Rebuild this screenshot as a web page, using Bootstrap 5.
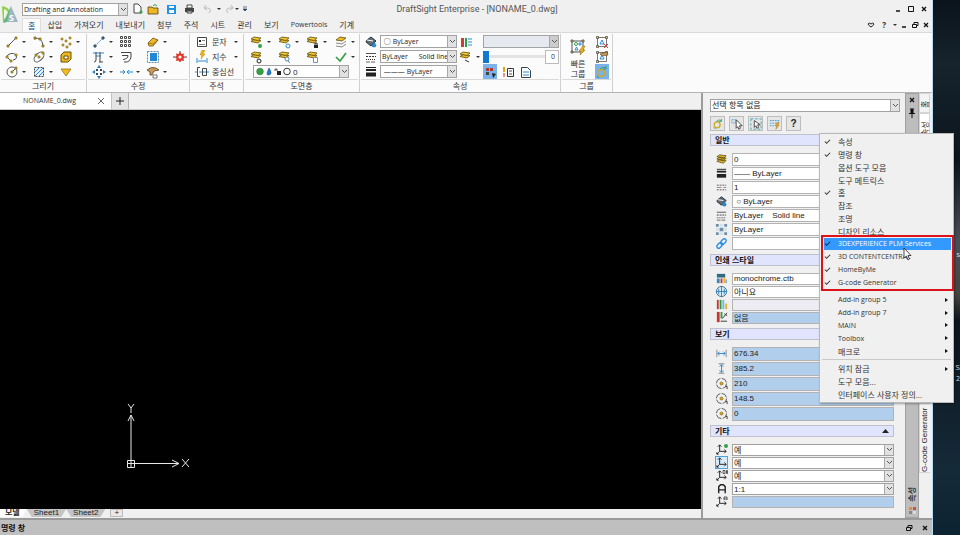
<!DOCTYPE html>
<html lang="ko">
<head>
<meta charset="utf-8">
<meta name="viewport" content="width=device-width, initial-scale=1">
<title>DraftSight Enterprise - [NONAME_0.dwg]</title>
<link href="https://cdn.jsdelivr.net/npm/bootstrap@5.3.0/dist/css/bootstrap.min.css" rel="stylesheet">
<style>
body{font:8px/12px "Open Sans","Noto Sans CJK KR",sans-serif;color:#333;background:#0c151d;overflow:hidden}
button,select,input{font:inherit;color:inherit}
svg{display:block;flex:none}
.ic{width:14px;height:14px}
.app{background:#f0f0f0;border-right:1px solid #b9dcf5;min-width:0}
.desk{width:27px;background:linear-gradient(#0a131b,#16232d 12%,#0b151d 30%,#4a4e59 45%,#47443f 55%,#0a141b 60%,#10202b 75%,#152a38 88%,#0c2331);color:#ddd;padding:248px 0 0}
.desk span{line-height:12px}
.brand{width:22px;padding:5px 0 0 1px}
.lat{font-size:7px}
.combo{background:#fff;border:1px solid #a2a2a2;height:13px;min-width:0}
.combo select{appearance:none;border:0;background:transparent;padding:0 0 0 1px;line-height:11px;outline:0;color:#222;min-width:0;width:100%}
.chev{width:9px;background:#e1e1e1;border-left:1px solid #a8a8a8;align-self:stretch;flex:none;display:grid;place-items:center}
.chev svg{width:7px;height:5px}
.tool{padding:0;border:0;border-radius:0;height:15px;line-height:12px;background:transparent;display:flex;align-items:center;gap:3px;color:#333;font-size:8px;white-space:nowrap}
.tri{width:0;height:0;border:2px solid transparent;border-top-color:#333;border-bottom:0;flex:none}
.qat{padding:0;border:0;background:transparent}
.win{font-size:8px}
.win svg{width:8px;height:8px}
.menutab{padding:0 6px;color:#333;text-decoration:none;line-height:14px;height:14px}
.menutab.on{background:#fbfbfb;color:#234e86;border:1px solid #ddd;border-bottom:0;line-height:13px;padding:0 5px}
.ribbon{background:#fbfbfb;border-top:1px solid #d9d9d9;border-bottom:1px solid #b5b5b5;padding-top:1px}
.grp{border-right:1px solid #d0d0d0;padding:0 1px}
.grp-name{border-top:1px solid #d9d9d9;text-align:center;line-height:12px;height:13px}
.tools{display:grid;grid-auto-rows:15px;align-items:center}
.g1{grid-template-columns:repeat(3,27px);padding-left:4px;width:84px}
.g2{grid-template-columns:27px 27px 27px 15px;padding-left:4px;width:100px}
.g3{width:51px;padding-left:4px}
.g4{grid-template-columns:repeat(4,28px);padding-left:5px;width:113px}
.g5{grid-template-columns:14px 77px 22px 76px;padding-left:3px;column-gap:2px;width:198px}
.g6{width:49px;padding:0 2px 0 7px;height:45px}
.sel{background:#7cb2ea}
.track{height:3px;background:#e3e3e3}
.docs{height:17px;background:#f0f0f0;border-bottom:1px solid #c9c9c9}
.doc{background:#fff;width:112px;border-right:1px solid #c4c4c4;padding:0 6px 0 23px}
.plus{width:17px;border:0;border-right:1px solid #b5b5b5;background:#e4e4e4;padding:0}
.cad{background:#000;padding:0 0 40px 125px;min-height:0}
.sheets{height:9px;background:#f0f0f0;overflow:hidden}
.sheets button{border:0;padding:0 7px;line-height:8px;height:8px;background:#c4c4c4;color:#222;clip-path:polygon(0 0,100% 0,calc(100% - 5px) 100%,5px 100%);font-family:"Liberation Sans","Noto Sans CJK KR",sans-serif}
.sheets button.on{background:#fff;padding-left:5px;font-weight:700;clip-path:polygon(0 0,100% 0,calc(100% - 5px) 100%,0 100%)}
.sheets button.add{clip-path:none;background:#e8e8e8;border:1px solid #bbb;padding:0 3px;margin-left:5px;line-height:6px}
.cmd{background:#bfbfbf;border-top:2px solid #9a9a9a;height:17px;padding:0 3px 0 1px;color:#111}
.props{width:204px;border-left:2px solid #9c9c9c;padding:6px 0 0 7px;font-family:"Liberation Sans","Noto Sans CJK KR",sans-serif;color:#222;flex:none}
.props .combo{margin-right:5px}
.pbtns{gap:4px;margin:4px 0 3px}
.pbtn{width:15px;height:15px;padding:0;border:1px solid #bdbdbd;background:#e6e6e6;display:grid;place-items:center}
.pbtn svg{width:12px;height:12px}
.sec{margin-right:11px}
.sec h2{font-size:8px;line-height:11px;height:12px;margin:0;font-weight:700;background:#e0e4fd;border:1px solid #bfc1cf;padding:0 4px;color:#111}
.rows{padding:6px 0 4px}
.row-p{display:grid;grid-template-columns:22px 1fr;align-items:center;height:13px}
.row-p svg.ic{width:13px;height:13px;margin-left:5px}
.tall .row-p{height:14px}.view .row-p{height:15px}
.fld{height:12px;border:1px solid #b3b3b3;background:#fff;width:100%;padding:0 1px;border-radius:0;line-height:10px;color:#222;min-width:0}
.view .fld{height:14px}.tall .fld{height:13px}
.fld.blue{background:#b1cfec}.fld.dim{background:#ececf2}
.props .row-p .combo{margin:0;height:12px}
.rail{width:14px;background:#bdbdbd;border:1px solid #a0a0a0;flex:none;padding:2px 0}
.side{width:13px;flex:none;background:#f0f0f0}
.vert{writing-mode:vertical-rl;text-orientation:sideways;transform:rotate(180deg);white-space:nowrap}
.side a{color:#222;text-decoration:none;display:block;border:1px solid #d5d5d5;background:#f3f3f3;line-height:9px;width:11px}
.side a.gcode{font-family:"Liberation Sans",sans-serif;border-left:0;height:70px;padding-bottom:4px}
.ctx{position:absolute;left:819px;top:133px;width:135px;background:#f0f0f0;border:1px solid #b9b9b9;padding:2px 2px 1px;color:#333;box-shadow:1px 1px 2px #0005}
.ctx ul{list-style:none;margin:0;padding:0;display:flex;flex-direction:column}
.ctx li{flex:1 1 0;display:flex;min-height:0}
.ctx .opt{border:0;padding:0 3px 0 0;background:transparent;width:100%;margin:0 0 1px 2px;display:flex;align-items:center;text-align:left;line-height:11px;white-space:nowrap}
.opt .ck{width:14px}
.opt .ck svg{width:7px;height:7px}
.opt.hot{background:#3399ff;color:#fff}.opt.hot .ck{color:#124}
.m1{height:153px}.m2{height:64px}.m3{height:38px}
.rule{border-top:1px solid #c9c9c9;margin:1px 0 3px}
.gap5{height:5px}
.arr{width:0;height:0;border:2px solid transparent;border-left:3px solid #111;border-right:0;margin-left:auto}
.redbox{position:absolute;left:1px;top:101px;width:133px;height:56px;border:2px solid #dc1219;pointer-events:none}
.cursor{position:absolute;left:83px;top:113px;width:9px;height:14px}
.sp1{margin-left:4px}
.ttl{font:9px/16px Roboto,sans-serif;color:#555}
</style>
<script src="https://cdn.jsdelivr.net/npm/bootstrap@5.3.0/dist/js/bootstrap.bundle.min.js"></script>
</head>
<body class="vh-100 d-flex position-relative">
<svg width="0" height="0" class="position-absolute" aria-hidden="true">
<defs>
<symbol id="chv" viewBox="0 0 7 5"><path d="M1 1l2.500 2.500L6 1" fill="none" stroke="#555"/></symbol>
<symbol id="layers" viewBox="0 0 14 14"><path d="M2 9l3-2 7 1-3 3zM2 6.500l3-2 7 1-3 3zM2 4l3-2 7 1-3 3z" fill="#e8b71e" stroke="#4e4518" stroke-width=".8"/></symbol>
<symbol id="lay-s" viewBox="0 0 14 14"><path d="M1 6.500l3-2 7 1-3 2.500z" fill="#edbd20" stroke="#5a4b12" stroke-width=".8"/><path d="M1 4l3-2 7 1-3 2.500z" fill="#f6c928" stroke="#5a4b12" stroke-width=".8"/></symbol>
<symbol id="line" viewBox="0 0 14 14"><path d="M3 11L11 3" stroke="#555"/><path d="M2 10h2v2H2zM10 2h2v2h-2z" fill="#e0bd2a" stroke="#6b5a12" stroke-width=".7"/></symbol>
<symbol id="arc" viewBox="0 0 14 14"><path d="M2 4q8-3 9 7" fill="none" stroke="#555"/><path d="M2 2h2v2H2zM7 3h2v2H7zM10 10h2v2h-2z" fill="#e0bd2a" stroke="#6b5a12" stroke-width=".7"/></symbol>
<symbol id="pts" viewBox="0 0 14 14"><g fill="#e3b524" stroke="#6b5a12" stroke-width=".5"><path d="M2 3h2v2H2zM6 5h2v2H6zM10 2h2v2h-2zM3 9h2v2H3zM10 8h2v2h-2zM7 11h2v2H7z"/></g></symbol>
<symbol id="poly" viewBox="0 0 14 14"><path d="M2 7a5 4 0 019-2q2 4-3 5M2 7l4 4" fill="none" stroke="#555"/><path d="M1 6h2v2H1zM5 10h2v2H5zM10 4h2v2h-2z" fill="#e0bd2a" stroke="#6b5a12" stroke-width=".6"/></symbol>
<symbol id="ell" viewBox="0 0 14 14"><ellipse cx="7" cy="7" rx="6" ry="3.500" transform="rotate(-45 7 7)" fill="none" stroke="#555"/><path d="M6 6h2v2H6zM10 2h2v2h-2zM3 4h2v2H3z" fill="#d7b632" stroke="#6b5a12" stroke-width=".6"/></symbol>
<symbol id="reg" viewBox="0 0 14 14"><path d="M2 5l3-3h7v7l-3 3H2z" fill="#ecb91f" stroke="#6b4f08"/><path d="M5 6h4v3H5z" fill="#fff" stroke="#6b4f08"/></symbol>
<symbol id="circ" viewBox="0 0 14 14"><circle cx="7" cy="7" r="5" fill="#fff" stroke="#555"/><path d="M7 7l3-3" stroke="#555"/><path d="M6 6h2v2H6zM10 2h2v2h-2z" fill="#d7b632" stroke="#6b5a12" stroke-width=".6"/></symbol>
<symbol id="hat" viewBox="0 0 14 14"><path d="M2.500 2.500h9v9h-9z" fill="#e6f2fb" stroke="#444" stroke-dasharray="2 1"/><path d="M3 7l4-4M3 11l8-8M7 11l4-4" stroke="#2c8bd6"/></symbol>
<symbol id="ytri" viewBox="0 0 14 14"><path d="M2 4h10L7 11z" fill="#f4bd1b" stroke="#8a650a" stroke-width=".7"/></symbol>
<symbol id="move" viewBox="0 0 14 14"><path d="M3 11L11 3" stroke="#3a96dd" stroke-dasharray="2 1"/><path d="M2 10h2v2H2zM10 2h2v2h-2z" fill="#5f90b5" stroke="#345"/></symbol>
<symbol id="grid9" viewBox="0 0 14 14"><g fill="#fff" stroke="#444"><path d="M1.500 1.500h2v2h-2zM5.500 1.500h2v2h-2zM9.500 1.500h2v2h-2zM1.500 5.500h2v2h-2zM5.500 5.500h2v2h-2zM9.500 5.500h2v2h-2zM1.500 9.500h2v2h-2zM5.500 9.500h2v2h-2zM9.500 9.500h2v2h-2z"/></g></symbol>
<symbol id="erase" viewBox="0 0 14 14"><path d="M2 8l5-5 5 2-5 6H3z" fill="#f2b72c" stroke="#6b4f08" stroke-width=".8"/><path d="M2 8l5 1 5-4" fill="none" stroke="#6b4f08" stroke-width=".6"/></symbol>
<symbol id="trim" viewBox="0 0 14 14"><path d="M1 3h11M4 6h5" stroke="#2c8bd6"/><path d="M4 2v8q0 2-2 2M8 2v10M7 12h4" stroke="#444" fill="none"/></symbol>
<symbol id="off" viewBox="0 0 14 14"><path d="M2 2.500h10V7q-1 5-5 5H5M3 5.500h6Q9 9 4 9.500" fill="none" stroke="#444"/></symbol>
<symbol id="box" viewBox="0 0 14 14"><path d="M4 3h7v8H4z" fill="#2088d8"/><path d="M1.500 1.500h11v11h-11z" fill="none" stroke="#5a86a8" stroke-dasharray="2 1"/></symbol>
<symbol id="burst" viewBox="0 0 14 14"><path d="M0 7h14M7 1v12" stroke="#444" stroke-dasharray="2 1"/><path d="M7 2l1.500 2 2.500-.5-.5 2.500 2 1-2 1.500.5 2.500-2.500-.5L7 12l-1.500-1.500L3 11l.5-2.500-2-1.500 2-1L3 3.500l2.500.5z" fill="#e3372a"/><circle cx="7" cy="7" r="1.600" fill="#fff"/></symbol>
<symbol id="arr4" viewBox="0 0 14 14"><path d="M7 0l2 3H5zM7 14l2-3H5zM0 7l3-2v4zM14 7l-3-2v4z" fill="#2c7cc0"/><path d="M4 4h2v2H4zM8 4h2v2H8zM4 8h2v2H4zM8 8h2v2H8z" fill="#345"/></symbol>
<symbol id="join" viewBox="0 0 14 14"><path d="M1 7h5M8 7h6M4 5l2 2-2 2M10 5L8 7l2 2" stroke="#2c8bd6" fill="none"/></symbol>
<symbol id="brush" viewBox="0 0 14 14"><path d="M1 5q4-4 9-2l3 2-5 1-2 4H4V7z" fill="#c89a5a" stroke="#5a4020" stroke-width=".8"/><path d="M7 10h4v3H7z" fill="#fff" stroke="#444" stroke-width=".7"/></symbol>
<symbol id="note" viewBox="0 0 14 14"><path d="M2.500 2.500h9v9h-9z" fill="#fff" stroke="#444"/><path d="M4 5h2v2H4z" fill="#222"/><path d="M7 5.500h3M4 9.500h6" stroke="#888"/></symbol>
<symbol id="dim" viewBox="0 0 14 14"><path d="M7 0L5 5h2L6 9l4-5H8l2-4z" fill="#f0b41a" stroke="#a9780b" stroke-width=".4"/><path d="M2 8v5M12 8v5M3 11h8" stroke="#2c8bd6"/></symbol>
<symbol id="cen" viewBox="0 0 14 14"><path d="M5 2.500H2.500v9H5M7.500 3.500h4v7h-4z" fill="none" stroke="#444"/><path d="M0 7h14" stroke="#2c8bd6" stroke-dasharray="3 1"/></symbol>
<symbol id="chk" viewBox="0 0 14 14"><path d="M2 7l4 4 6-8" fill="none" stroke="#35a045" stroke-width="1.700"/></symbol>
<symbol id="paint" viewBox="0 0 14 14"><path d="M3 5l4-3 5 4-5 5-5-4z" fill="#5f6d78" stroke="#26323b"/><path d="M3 5l6 1" stroke="#fff"/><path d="M10 7q4 5 0 5t0-5" fill="#2c8bd6" stroke="#1a5d92" stroke-width=".5"/></symbol>
<symbol id="dash" viewBox="0 0 14 14"><path d="M2 3.500h10" stroke="#555"/><path d="M2 6.500h10" stroke="#333" stroke-dasharray="2 1"/><path d="M2 9.500h10" stroke="#333" stroke-dasharray="1 1"/><path d="M2 12h10" stroke="#666" stroke-dasharray="4 1"/></symbol>
<symbol id="dash2" viewBox="0 0 14 14"><path d="M2 4.500h10M2 9.500h10" stroke="#555" stroke-dasharray="2 1"/><path d="M2 7h10" stroke="#888" stroke-dasharray="5 2"/></symbol>
<symbol id="wt" viewBox="0 0 14 14"><path d="M2 2.500h10" stroke="#222"/><path d="M2 5h10" stroke="#222" stroke-width="2"/><path d="M2 9.500h10" stroke="#222" stroke-width="4"/></symbol>
<symbol id="ctab" viewBox="0 0 14 14"><path d="M2 3h3v9H2z" fill="#d23b34"/><path d="M6 3h2v9H6z" fill="#2c9c45"/><path d="M10 3v9M12 3v9" stroke="#2c8bd6" stroke-dasharray="2 1"/></symbol>
<symbol id="quick" viewBox="0 0 18 18"><path d="M3 3h11v11H3z" fill="#fff" stroke="#555"/><path d="M2 2h2v2H2zM13 2h2v2h-2zM2 13h2v2H2z" fill="#f4d96a" stroke="#444" stroke-width=".8"/><circle cx="7" cy="6" r="1.500" fill="none" stroke="#37a04b"/><path d="M10 5h2v2h-2zM6 12l1.500-3L9 12z" fill="none" stroke="#2c8bd6"/><path d="M14 8l-4 5h2l-1 4 5-5h-2l2-4z" fill="#eeb119" stroke="#8a650a" stroke-width=".5"/></symbol>
<symbol id="grp" viewBox="0 0 14 14"><path d="M2.500 2.500h9v9h-9z" fill="#fff" stroke="#777"/><path d="M1.500 1.500h2v2h-2zM10.500 1.500h2v2h-2zM1.500 10.500h2v2h-2z" fill="#eaca50" stroke="#444" stroke-width=".7"/><path d="M5 9l2-4 2 4z" fill="none" stroke="#2c8bd6"/></symbol>
<symbol id="pick" viewBox="0 0 14 14"><circle cx="6" cy="8" r="3.500" fill="none" stroke="#d0a91c" stroke-width="1.500"/><path d="M5 4q3-3 6-1M11 1v3H8" fill="none" stroke="#2f9e7d"/><path d="M2 11l2 2" stroke="#2c8bd6"/></symbol>
<symbol id="cur" viewBox="0 0 14 14"><path d="M1 2h4v4H1z" fill="none" stroke="#5a9cc9" stroke-dasharray="2 1"/><path d="M6 2v10l2-2 1 3 2-1-1-3h3z" fill="#fff" stroke="#333"/></symbol>
<symbol id="sell" viewBox="0 0 14 14"><path d="M1 1h12v12H1z" fill="none" stroke="#2c9fb5" stroke-dasharray="3 2"/><path d="M5 3v8l2-2 1 3 2-1-1-3h3z" fill="#fff" stroke="#333"/></symbol>
<symbol id="flt" viewBox="0 0 14 14"><path d="M1 3h12M1 6h10M1 9h6" stroke="#3a8fce" stroke-dasharray="2 1"/><path d="M10 5l-3 4h2l-1 4 4-5h-2l2-3z" fill="#eeb119" stroke="#8a650a" stroke-width=".5"/></symbol>
<symbol id="trn" viewBox="0 0 14 14"><path d="M1 1h3v3H1zM10 1h3v3h-3zM5 5h4v4H5zM1 10h3v3H1zM10 10h3v3h-3z" fill="#6e90a8"/><path d="M5 1h4v3H5zM1 5h3v4H1zM10 5h3v4h-3zM5 10h4v3H5z" fill="#d6e2ea"/></symbol>
<symbol id="link" viewBox="0 0 14 14"><g fill="none" stroke="#2b8fdf" stroke-width="1.500"><rect x="5.500" y="3" width="7" height="4" rx="2" transform="rotate(-45 9 5)"/><rect x="1.500" y="7" width="7" height="4" rx="2" transform="rotate(-45 5 9)"/></g></symbol>
<symbol id="pst" viewBox="0 0 14 14"><path d="M2 2h9v4H2z" fill="#2f6b84"/><path d="M2 7h3v5H2z" fill="#3b86b1"/><path d="M6 7h2v5H6z" fill="#c33c36"/><path d="M9 6h2v6H9z" fill="#e5b42f"/><path d="M12 8v4" stroke="#3b86b1"/></symbol>
<symbol id="glb" viewBox="0 0 14 14"><circle cx="7" cy="7" r="5.500" fill="#d9ecf7" stroke="#4a6b80"/><path d="M7 1v12M1 7h12M4 4v6M10 4v6" stroke="#2b86bf"/></symbol>
<symbol id="pct" viewBox="0 0 14 14"><path d="M2 2h2v10H2z" fill="#c93631"/><path d="M5 2h2v10H5z" fill="#2c9c45"/><path d="M8 2h2v10H8z" fill="#6fb9dc"/><path d="M11 6h2v6h-2z" fill="#e4b22c"/></symbol>
<symbol id="pno" viewBox="0 0 14 14"><path d="M2 1h3v11H2z" fill="#c93631"/><path d="M6 1h2v7H6z" fill="#2c9c45"/><path d="M6 11h7M8 8l5-6M10 3l3 2" stroke="#333" fill="none"/></symbol>
<symbol id="wid" viewBox="0 0 14 14"><path d="M2 3v8M12 3v8" stroke="#888"/><path d="M3 7h8M5 5L3 7l2 2M9 5l2 2-2 2" fill="none" stroke="#2c86d1"/></symbol>
<symbol id="hgt" viewBox="0 0 14 14"><path d="M4 2h6M4 12h6" stroke="#777"/><path d="M7 3v8M5 5l2-2 2 2M5 9l2 2 2-2" fill="none" stroke="#2c86d1"/></symbol>
<symbol id="cc" viewBox="0 0 14 14"><circle cx="7" cy="7" r="5.500" fill="none" stroke="#555" stroke-dasharray="7 1.500"/><circle cx="7" cy="7" r="1.700" fill="#d8a21c" stroke="#6b4f08" stroke-width=".5"/><path d="M11 10h2v3" fill="none" stroke="#333"/></symbol>
<symbol id="ucs" viewBox="0 0 14 14"><path d="M5 2v7h7M5 9l-3 3M3 4l2-2 2 2M10 7l2 2-2 2M2 10v2h2" fill="none" stroke="#222"/></symbol>
<symbol id="ck" viewBox="0 0 8 8"><path d="M1 4l2 2 4-4" fill="none" stroke="currentColor" stroke-width="1.200"/></symbol>
<symbol id="x" viewBox="0 0 8 8"><path d="M2 2l4 4M6 2L2 6" stroke="#111" stroke-width="1.300"/></symbol>
<symbol id="min" viewBox="0 0 8 8"><path d="M2 6h4" stroke="#111" stroke-width="1.500"/></symbol>
<symbol id="max" viewBox="0 0 8 8"><path d="M1.500 1.500h5v5h-5z" fill="none" stroke="#111"/></symbol>
<symbol id="rst" viewBox="0 0 8 8"><path d="M3 3V1.500h4v3H5.500M1.500 3.500h4v3h-4z" fill="none" stroke="#111"/></symbol>
</defs></svg>

<div class="app d-flex flex-column flex-fill">
  <header class="d-flex">
    <div class="brand"><svg width="18" height="22" viewBox="0 0 18 22"><path d="M1 1q8 1 8 8t-7 8z" fill="#8ed14a"/><path d="M3 4q4 1 4 5t-4 5z" fill="#e9f6dc"/><path d="M10 1l7 16H5z" fill="#9fb6c4"/><path d="M10 1L6 17l-4 1z" fill="#5fb87f"/><text x="8" y="16" font-size="9" font-weight="700" fill="#fff" font-family="Open Sans">S</text></svg></div>
    <div class="flex-fill d-flex flex-column">
      <div class="d-flex align-items-center position-relative" style="height:18px">
        <div class="combo d-flex lat" style="width:106px"><select aria-label="작업 공간"><option>Drafting and Annotation</option></select><span class="chev"><svg><use href="#chv"/></svg></span></div>
        <div class="d-flex align-items-center ms-1" style="gap:3px">
          <button class="qat" aria-label="새로 만들기"><svg width="12" height="12" viewBox="0 0 12 12"><path d="M2 1h4l3 3v6H2z" fill="#fff" stroke="#444"/><path d="M9 7v4M7 9h4" stroke="#37a04b"/></svg></button>
          <button class="qat" aria-label="열기"><svg width="12" height="12" viewBox="0 0 12 12"><path d="M1 4h4l1 1h5v6H1z" fill="#edb624" stroke="#54410a" stroke-width=".8"/><path d="M6 3q2-3 4 0" fill="none" stroke="#37a04b"/></svg></button>
          <button class="qat sp1" aria-label="저장"><svg width="11" height="12" viewBox="0 0 11 12"><path d="M1 2h9v9H1z" fill="#1f94e4"/><path d="M3 3h5v2H3zM3 7h5v3H3z" fill="#fff"/></svg></button>
          <button class="qat sp1" aria-label="인쇄"><svg width="11" height="12" viewBox="0 0 11 12"><path d="M3 2h5v3H3z" fill="#fff" stroke="#444"/><path d="M1 5h9v4H1z" fill="#444"/><path d="M3 8h5v2H3z" fill="#ddd" stroke="#444"/></svg></button>
          <button class="qat sp1 d-flex align-items-center" aria-label="실행 취소"><svg width="11" height="12" viewBox="0 0 11 12"><path d="M4 2L2 5l3 2M2 5h4q4 1 1 5" fill="none" stroke="#bbb"/></svg><span class="tri ms-1"></span></button>
          <button class="qat d-flex align-items-center" aria-label="다시 실행"><svg width="11" height="12" viewBox="0 0 11 12"><path d="M7 2l2 3-3 2M9 5H5Q1 6 4 10" fill="none" stroke="#bbb"/></svg><span class="tri"></span></button>
          <button class="qat" aria-label="도구 모음 사용자 정의"><svg width="6" height="8" viewBox="0 0 6 8"><path d="M1 2h4M1 4h4l-2 2z" fill="#246" stroke="#246" stroke-width=".7"/></svg></button>
        </div>
        <span class="ttl position-absolute start-50 translate-middle-x text-nowrap">DraftSight Enterprise - [NONAME_0.dwg]</span>
        <div class="win ms-auto d-flex me-1" style="gap:5px"><button class="qat" aria-label="최소화"><svg><use href="#min"/></svg></button><button class="qat" aria-label="최대화"><svg><use href="#max"/></svg></button><button class="qat" aria-label="닫기"><svg><use href="#x"/></svg></button></div>
      </div>
      <nav class="d-flex align-items-end">
        <a href="#" class="menutab on">홈</a><a href="#" class="menutab">삽입</a><a href="#" class="menutab">가져오기</a><a href="#" class="menutab">내보내기</a><a href="#" class="menutab">첨부</a><a href="#" class="menutab">주석</a><a href="#" class="menutab">시트</a><a href="#" class="menutab">관리</a><a href="#" class="menutab">보기</a><a href="#" class="menutab lat">Powertools</a><a href="#" class="menutab">기계</a>
        <div class="win ms-auto d-flex align-items-center align-self-center" style="gap:3px;margin-right:2px"><button class="qat me-1" aria-label="즐겨찾기"><svg viewBox="0 0 8 8"><path d="M1 3q1-2 3 0 2-2 3 0-1 2-3 3-2-1-3-3z" fill="none" stroke="#222"/></svg></button><button class="qat fw-bold lh-1" aria-label="도움말">?</button><span class="tri ms-1"></span><button class="qat" aria-label="문서 최소화"><svg><use href="#min"/></svg></button><button class="qat" aria-label="문서 복원"><svg><use href="#rst"/></svg></button><button class="qat" aria-label="문서 닫기"><svg><use href="#x"/></svg></button></div>
      </nav>
    </div>
  </header>

  <section class="ribbon d-flex">
    <div class="grp"><div class="tools g1">
      <button class="tool" aria-label="선"><svg class="ic"><use href="#line"/></svg><span class="tri"></span></button>
      <button class="tool" aria-label="호"><svg class="ic"><use href="#arc"/></svg><span class="tri"></span></button>
      <button class="tool" aria-label="점"><svg class="ic"><use href="#pts"/></svg><span class="tri"></span></button>
      <button class="tool" aria-label="폴리선"><svg class="ic"><use href="#poly"/></svg><span class="tri"></span></button>
      <button class="tool" aria-label="타원"><svg class="ic"><use href="#ell"/></svg><span class="tri"></span></button>
      <button class="tool" aria-label="영역"><svg class="ic"><use href="#reg"/></svg></button>
      <button class="tool" aria-label="원"><svg class="ic"><use href="#circ"/></svg><span class="tri"></span></button>
      <button class="tool" aria-label="해치"><svg class="ic"><use href="#hat"/></svg><span class="tri"></span></button>
      <button class="tool" aria-label="마스크"><svg class="ic"><use href="#ytri"/></svg></button>
    </div><div class="grp-name">그리기</div></div>

    <div class="grp"><div class="tools g2">
      <button class="tool" aria-label="이동"><svg class="ic"><use href="#move"/></svg><span class="tri"></span></button>
      <button class="tool" aria-label="패턴"><svg class="ic"><use href="#grid9"/></svg></button>
      <button class="tool" aria-label="삭제"><svg class="ic"><use href="#erase"/></svg><span class="tri"></span></button><span></span>
      <button class="tool" aria-label="자르기"><svg class="ic"><use href="#trim"/></svg><span class="tri"></span></button>
      <button class="tool" aria-label="오프셋"><svg class="ic"><use href="#off"/></svg></button>
      <button class="tool" aria-label="축척"><svg class="ic"><use href="#box"/></svg></button>
      <button class="tool" aria-label="분해"><svg class="ic"><use href="#burst"/></svg></button>
      <button class="tool" aria-label="늘이기"><svg class="ic"><use href="#arr4"/></svg><span class="tri"></span></button>
      <button class="tool" aria-label="결합"><svg class="ic"><use href="#join"/></svg><span class="tri"></span></button>
      <button class="tool" aria-label="속성 복사"><svg class="ic"><use href="#brush"/></svg><span class="tri"></span></button>
    </div><div class="grp-name">수정</div></div>

    <div class="grp"><div class="tools g3">
      <button class="tool"><svg class="ic"><use href="#note"/></svg>문자<span class="tri ms-auto me-1"></span></button>
      <button class="tool"><svg class="ic"><use href="#dim"/></svg>지수<span class="tri ms-auto me-1"></span></button>
      <button class="tool"><svg class="ic"><use href="#cen"/></svg>중심선</button>
    </div><div class="grp-name">주석</div></div>

    <div class="grp"><div class="tools g4">
      <button class="tool" aria-label="도면층 켜기"><svg class="ic"><use href="#lay-s"/><circle cx="10" cy="11" r="2" fill="#37a04b"/></svg><span class="tri"></span></button>
      <button class="tool" aria-label="도면층 동결"><svg class="ic"><use href="#lay-s"/><circle cx="10" cy="11" r="2" fill="#fff" stroke="#2c8bd6"/></svg><span class="tri"></span></button>
      <button class="tool" aria-label="도면층 잠금"><svg class="ic"><use href="#lay-s"/><path d="M8 10h4v3H8z" fill="#222"/><path d="M9 10V8h2v2" fill="none" stroke="#222"/></svg><span class="tri"></span></button>
      <button class="tool" aria-label="도면층 병합"><svg class="ic" viewBox="0 0 14 14"><path d="M2 5l4-3 6 1-4 3z" fill="#edbd20" stroke="#5a4b12" stroke-width=".8"/><path d="M2 8l6 1 4-3M2 11l6 1 4-3" fill="none" stroke="#888"/></svg><span class="tri"></span></button>
      <button class="tool" aria-label="도면층 격리"><svg class="ic"><use href="#lay-s"/><circle cx="9" cy="11" r="2" fill="#fff" stroke="#222"/></svg></button>
      <button class="tool" aria-label="도면층 미리보기"><svg class="ic"><use href="#lay-s"/><circle cx="9" cy="9" r="2" fill="#fff" stroke="#5a86a8"/><path d="M10 11l2 2" stroke="#5a86a8"/></svg></button>
      <button class="tool" aria-label="도면층 상태"><svg class="ic"><use href="#lay-s"/><path d="M7.500 7.500h4v5h-4z" fill="#fff" stroke="#7a93a8"/></svg></button>
      <button class="tool" aria-label="도면층 활성화"><svg class="ic"><use href="#chk"/></svg><span class="tri"></span></button>
      <div class="combo d-flex align-items-center" style="grid-column:1/5;width:96px;margin-left:3px">
        <svg width="38" height="11" viewBox="0 0 38 11"><circle cx="6" cy="5.500" r="3.300" fill="#35a045" stroke="#23722f" stroke-width=".6"/><path d="M15 2q4 6 0 7t0-7" fill="#1d7fd0" stroke="#124e80" stroke-width=".6"/><path d="M23 5h4v4h-4z" fill="#222"/><path d="M21 5V3h2v2" fill="none" stroke="#222" stroke-width=".8"/><circle cx="33" cy="5.500" r="3.300" fill="#fff" stroke="#333"/></svg>
        <select aria-label="활성 도면층"><option>0</option></select><span class="chev"><svg><use href="#chv"/></svg></span></div>
    </div><div class="grp-name">도면층</div></div>

    <div class="grp"><div class="tools g5">
      <svg class="ic"><use href="#paint"/></svg>
      <div class="combo d-flex"><select class="lat" aria-label="선 색상"><option>&nbsp;○ ByLayer</option></select><span class="chev"><svg><use href="#chv"/></svg></span></div>
      <button class="tool" aria-label="색상 표"><svg class="ic"><use href="#ctab"/></svg></button>
      <div class="combo d-flex" style="background:#e6eaf0"><select disabled aria-label="인쇄 스타일"><option></option></select><span class="chev" style="background:#ccc"><svg><use href="#chv"/></svg></span></div>
      <svg class="ic"><use href="#dash"/></svg>
      <div class="combo d-flex"><select class="lat" aria-label="선 스타일"><option>ByLayer &nbsp; &nbsp; &nbsp;Solid line</option></select><span class="chev"><svg><use href="#chv"/></svg></span></div>
      <button class="tool" aria-label="투명도"><svg class="ic"><use href="#lay-s"/><path d="M6 10l4 2" stroke="#333"/></svg><span class="tri"></span></button>
      <div class="d-flex align-items-center"><div class="track flex-fill d-flex align-items-center"><svg width="6" height="12"><path d="M0 0h6v12H0z" fill="#0f79d2"/></svg></div><input class="lat text-end" aria-label="투명도 값" value="0" style="width:14px;height:14px;border:1px solid #bbb;padding:0 3px;background:#fff"></div>
      <svg class="ic"><use href="#wt"/></svg>
      <div class="combo d-flex"><select class="lat" aria-label="선 두께"><option>&nbsp;——— ByLayer</option></select><span class="chev"><svg><use href="#chv"/></svg></span></div>
      <span></span>
      <div class="d-flex gap-1"><button class="tool sel px-0" aria-label="속성 팔레트"><svg class="ic"><path d="M3 3h3v3H3zM7 3h3v3H7z" fill="#b0352c"/><path d="M3 7h3v3H3z" fill="#444"/><path d="M9 8l4 1-3 4z" fill="#222"/></svg></button><button class="tool" aria-label="속성 페인터"><svg class="ic" viewBox="0 0 14 14"><path d="M2 2h2v5H2z" fill="#e3a21f"/><path d="M3 8v4" stroke="#c33"/><path d="M6.500 3.500h6v8h-6z" fill="#fff" stroke="#333"/><path d="M8 6h3M8 9h3" stroke="#555"/></svg></button><button class="tool" aria-label="특성 목록"><svg class="ic" viewBox="0 0 14 14"><path d="M2.500 2.500h6l3 3v7h-9z" fill="#fff" stroke="#345"/><path d="M4 7h6M4 10h6" stroke="#2c8bd6"/></svg></button></div>
    </div><div class="grp-name">속성</div></div>

    <div class="grp"><div class="g6 d-flex justify-content-between">
      <button class="tool h-100 flex-column justify-content-between pt-1" style="line-height:10px"><svg width="18" height="18"><use href="#quick"/></svg><span>빠른<br>그룹</span></button>
      <div><button class="tool" aria-label="그룹 해제"><svg class="ic"><use href="#grp"/><path d="M9 9l4 4M13 9l-4 4" stroke="#e03a30"/></svg></button><button class="tool" aria-label="그룹 편집"><svg class="ic"><use href="#grp"/><path d="M5 4l7-2 1 3-6 1z" fill="#c89a5a" stroke="#5a4020" stroke-width=".6"/></svg></button><button class="tool sel" aria-label="그룹 선택"><svg class="ic"><use href="#pick"/></svg></button></div>
    </div><div class="grp-name">그룹</div></div>
  </section>

  <div class="d-flex flex-fill" style="min-height:0">
    <main class="d-flex flex-column flex-fill">
      <div class="docs d-flex"><div class="doc d-flex justify-content-between align-items-center"><span class="lat">NONAME_0.dwg</span><button class="qat" aria-label="문서 탭 닫기"><svg width="8" height="8" viewBox="0 0 8 8"><path d="M1 1l6 6M7 1L1 7" stroke="#444" stroke-width=".8"/></svg></button></div><button class="plus d-grid" style="place-items:center" aria-label="새 문서"><svg width="8" height="8" viewBox="0 0 8 8"><path d="M4 0v8M0 4h8" stroke="#222"/></svg></button></div>
      <div class="cad flex-fill d-flex align-items-end"><svg width="68" height="66" viewBox="0 0 68 66" fill="none" stroke="#e8e8e8"><path d="M2.500 57.500h7v7h-7zM6 12v53M2 60.500h51M3 18l3-6 3 6M47 57l7 3.500-7 3.500M3 1l3 4 3-4M6 5v5M57 56l7 8M64 56l-7 8"/></svg></div>
      <div class="sheets d-flex"><button class="on">모델</button><button>Sheet1</button><button>Sheet2</button><button class="add" aria-label="시트 추가">+</button></div>
    </main>

    <aside class="props">
      <div class="combo d-flex"><select aria-label="선택 항목"><option>선택 항목 없음</option></select><span class="chev"><svg><use href="#chv"/></svg></span></div>
      <div class="d-flex pbtns"><button class="pbtn" aria-label="선택 추가"><svg><use href="#pick"/></svg></button><button class="pbtn" aria-label="선택"><svg><use href="#cur"/></svg></button><button class="pbtn" aria-label="창 선택"><svg><use href="#sell"/></svg></button><button class="pbtn" aria-label="빠른 선택"><svg><use href="#flt"/></svg></button><button class="pbtn fw-bold" style="font-size:10px" aria-label="도움말">?</button></div>
      <section class="sec tall"><h2>일반</h2><div class="rows">
        <label class="row-p"><svg class="ic"><use href="#layers"/></svg><input class="fld" value="0"></label>
        <label class="row-p"><svg class="ic"><use href="#wt"/></svg><input class="fld" value="—— ByLayer"></label>
        <label class="row-p"><svg class="ic"><use href="#dash2"/></svg><input class="fld" value="1"></label>
        <label class="row-p"><svg class="ic"><use href="#paint"/></svg><input class="fld" value=" ○ ByLayer"></label>
        <label class="row-p"><svg class="ic"><use href="#dash"/></svg><input class="fld" value="ByLayer &nbsp; &nbsp;Solid line"></label>
        <label class="row-p"><svg class="ic"><use href="#trn"/></svg><input class="fld" value="ByLayer"></label>
        <label class="row-p"><svg class="ic"><use href="#link"/></svg><input class="fld" value=""></label>
      </div></section>
      <section class="sec"><h2>인쇄 스타일</h2><div class="rows">
        <label class="row-p"><svg class="ic"><use href="#pst"/></svg><input class="fld" value="monochrome.ctb"></label>
        <label class="row-p"><svg class="ic"><use href="#glb"/></svg><input class="fld" value="아니요"></label>
        <label class="row-p"><svg class="ic"><use href="#pct"/></svg><input class="fld dim" value=""></label>
        <label class="row-p"><svg class="ic"><use href="#pno"/></svg><input class="fld blue" value="없음"></label>
      </div></section>
      <section class="sec view"><h2>보기</h2><div class="rows">
        <label class="row-p"><svg class="ic"><use href="#wid"/></svg><input class="fld blue" value="676.34"></label>
        <label class="row-p"><svg class="ic"><use href="#hgt"/></svg><input class="fld blue" value="385.2"></label>
        <label class="row-p"><svg class="ic"><use href="#cc"/></svg><input class="fld blue" value="210"></label>
        <label class="row-p"><svg class="ic"><use href="#cc"/></svg><input class="fld blue" value="148.5"></label>
        <label class="row-p"><svg class="ic"><use href="#cc"/></svg><input class="fld blue" value="0"></label>
      </div></section>
      <section class="sec"><h2 class="d-flex justify-content-between align-items-center">기타<svg width="7" height="5" viewBox="0 0 7 5"><path d="M0 4h7L3.500 0z" fill="#222"/></svg></h2><div class="rows">
        <label class="row-p"><svg class="ic"><use href="#ucs"/><circle cx="11" cy="3" r="2" fill="#37a04b"/></svg><span class="combo d-flex"><select><option>예</option></select><span class="chev"><svg><use href="#chv"/></svg></span></span></label>
        <label class="row-p"><svg class="ic" style="background:#d7ebfb;outline:1px solid #4ba3e3;outline-offset:-1px"><use href="#ucs"/></svg><span class="combo d-flex"><select><option>예</option></select><span class="chev"><svg><use href="#chv"/></svg></span></span></label>
        <label class="row-p"><svg class="ic"><use href="#ucs"/><path d="M8 1.500h2v3H8zM11.500 1.500h1v3h-1z" fill="none" stroke="#333" stroke-width=".8"/></svg><span class="combo d-flex"><select><option>예</option></select><span class="chev"><svg><use href="#chv"/></svg></span></span></label>
        <label class="row-p"><svg class="ic" viewBox="0 0 14 14"><path d="M4 12V5l2-2h3l2 2v7M4 8.500h7" fill="none" stroke="#222" stroke-width="1.500"/></svg><span class="combo d-flex"><select><option>1:1</option></select><span class="chev"><svg><use href="#chv"/></svg></span></span></label>
        <label class="row-p"><svg class="ic"><use href="#ucs"/><path d="M9 5V2h3v3M9 4h3" fill="none" stroke="#333" stroke-width=".8"/></svg><input class="fld blue" value="" aria-label="주석 축척"></label>
      </div></section>
    </aside>
    <div class="rail d-flex flex-column align-items-center"><button class="qat" aria-label="팔레트 닫기"><svg width="8" height="8"><use href="#x"/></svg></button><button class="qat mt-1" aria-label="고정"><svg width="8" height="10" viewBox="0 0 8 10"><path d="M2 1h4M3 1v4h2V1M1 5.500h6M4 6v4" stroke="#111" fill="#111"/></svg></button><span class="vert mt-auto mb-1 fw-bold" style="line-height:12px">속성</span><svg width="9" height="9" viewBox="0 0 9 9"><path d="M1 1h3v3H1z" fill="#e58b3a"/><path d="M5 1h3v3H5z" fill="#cc4d42"/><path d="M1 5h3v3H1z" fill="#888"/><path d="M5 5h3v3H5z" fill="#d9d9d9"/></svg></div>
    <nav class="side d-flex flex-column"><a href="#" class="vert py-1" style="height:20px">홈</a><a href="#" class="vert text-end bg-white" style="height:290px"><span style="padding-bottom:7px">속성</span></a><a href="#" class="vert gcode">G-code Generator</a></nav>
  </div>
  <footer class="cmd d-flex align-items-center"><span class="fw-bold">명령 창</span><div class="win ms-auto d-flex gap-1"><button class="qat" aria-label="명령 창 분리"><svg><use href="#rst"/></svg></button><button class="qat ms-1" aria-label="명령 창 닫기"><svg><use href="#x"/></svg></button></div></footer>
</div>
<div class="desk d-flex flex-column align-items-end"><span>s</span><span style="margin-top:101px">S</span><span class="lat">2</span></div>

<div class="ctx">
  <ul class="m1">
    <li><button class="opt"><span class="ck"><svg><use href="#ck"/></svg></span>속성</button></li>
    <li><button class="opt"><span class="ck"><svg><use href="#ck"/></svg></span>명령 창</button></li>
    <li><button class="opt"><span class="ck"></span>옵션 도구 모음</button></li>
    <li><button class="opt"><span class="ck"></span>도구 메트릭스</button></li>
    <li><button class="opt"><span class="ck"><svg><use href="#ck"/></svg></span>홈</button></li>
    <li><button class="opt"><span class="ck"></span>참조</button></li>
    <li><button class="opt"><span class="ck"></span>조명</button></li>
    <li><button class="opt"><span class="ck"></span>디자인 리소스</button></li>
    <li><button class="opt lat hot"><span class="ck"><svg><use href="#ck"/></svg></span>3DEXPERIENCE PLM Services</button></li>
    <li><button class="opt lat"><span class="ck"><svg><use href="#ck"/></svg></span>3D CONTENTCENTRAL</button></li>
    <li><button class="opt lat"><span class="ck"><svg><use href="#ck"/></svg></span>HomeByMe</button></li>
    <li><button class="opt lat"><span class="ck"><svg><use href="#ck"/></svg></span>G-code Generator</button></li>
  </ul>
  <div class="gap5"></div>
  <ul class="m2">
    <li><button class="opt lat"><span class="ck"></span>Add-in group 5<span class="arr"></span></button></li>
    <li><button class="opt lat"><span class="ck"></span>Add-in group 7<span class="arr"></span></button></li>
    <li><button class="opt lat"><span class="ck"></span>MAIN<span class="arr"></span></button></li>
    <li><button class="opt lat"><span class="ck"></span>Toolbox<span class="arr"></span></button></li>
    <li><button class="opt"><span class="ck"></span>매크로<span class="arr"></span></button></li>
  </ul>
  <div class="rule"></div>
  <ul class="m3">
    <li><button class="opt"><span class="ck"></span>위치 잠금<span class="arr"></span></button></li>
    <li><button class="opt"><span class="ck"></span>도구 모음...</button></li>
    <li><button class="opt"><span class="ck"></span>인터페이스 사용자 정의...</button></li>
  </ul>
  <div class="redbox"></div>
  <svg class="cursor" viewBox="0 0 9 14"><path d="M1 1v10l2.500-2 1.500 4 1.500-1-1.500-3.500h3z" fill="#fff" stroke="#222" stroke-width=".8"/></svg>
</div>
</body>
</html>
